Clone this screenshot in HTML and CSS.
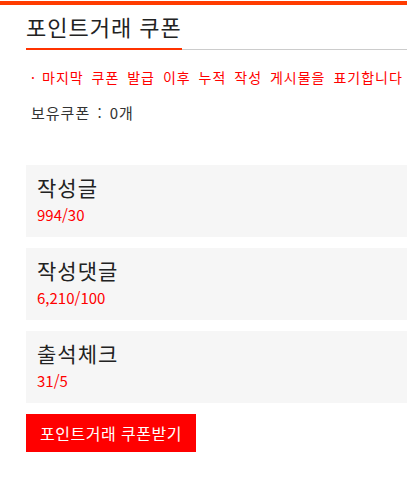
FILE: index.html
```html
<!DOCTYPE html>
<html lang="ko">
<head>
  <meta charset="UTF-8">
  <title>포인트거래 쿠폰</title>
  <meta name="viewport" content="width=device-width, initial-scale=1.0">
  <link rel="stylesheet" href="styles.css">
</head>
<body>
  <div class="top-bar"></div>

  <div class="coupon-wrap">
    <!-- page title with the red underline -->
    <div class="coupon-head">
      <h2>포인트거래 쿠폰</h2>
    </div>

    <p class="notice"><span class="dot">·</span>마지막 쿠폰 발급 이후 누적 작성 게시물을 표기합니다</p>
    <p class="owned">보유쿠폰 : 0개</p>

    <div class="stat-box">
      <div class="stat-title">작성글</div>
      <div class="stat-value">994/30</div>
    </div>
    <div class="stat-box">
      <div class="stat-title">작성댓글</div>
      <div class="stat-value">6,210/100</div>
    </div>
    <div class="stat-box">
      <div class="stat-title">출석체크</div>
      <div class="stat-value">31/5</div>
    </div>

    <button class="coupon-btn">포인트거래 쿠폰받기</button>
  </div>
</body>
</html>
```

FILE: styles.css
```css
* {
  box-sizing: border-box;
}

html, body {
  margin: 0;
  padding: 0;
  overflow: hidden;
}

body {
  padding-top: 1px;
  background: #fff;
  color: #222;
  font-family: "Noto Sans CJK KR", "Noto Sans", sans-serif;
}

.top-bar {
  height: 4px;
  background: #ff3c00;
}

.coupon-wrap {
  padding-left: 26px;
}

.coupon-head {
  display: flex;
  margin-top: 6px;
  border-bottom: 1px solid #cccccc;
}

.coupon-head h2 {
  margin: 0 0 -1px 0;
  padding-bottom: 7px;
  font-size: 22px;
  font-weight: normal;
  line-height: 30px;
  letter-spacing: 1px;
  color: #222;
  border-bottom: 2px solid #ff3300;
}

.notice {
  margin: 17px 0 0 0;
  padding-left: 5px;
  font-size: 14px;
  line-height: 20px;
  color: #ff0000;
  white-space: nowrap;
  letter-spacing: 1px;
  word-spacing: 3px;
}

.notice .dot {
  display: inline-block;
  width: 11px;
  word-spacing: 0;
}

.owned {
  margin: 16px 0 0 0;
  padding-left: 5px;
  font-size: 15px;
  line-height: 20px;
  color: #333;
  letter-spacing: 1px;
  word-spacing: 2px;
}

.stat-box {
  margin-top: 11px;
  padding: 10px 11px 12px;
  background: #f6f6f6;
}

.owned + .stat-box {
  margin-top: 42px;
}

.stat-title {
  font-size: 21px;
  line-height: 24px;
  letter-spacing: 1px;
  color: #222;
}

.stat-value {
  margin-top: 6px;
  font-size: 15px;
  line-height: 20px;
  color: #ff0000;
}

.coupon-btn {
  display: block;
  margin-top: 11px;
  width: 170px;
  height: 38px;
  padding: 0;
  border: none;
  background: #ff0000;
  color: #fff;
  font-family: inherit;
  font-size: 16px;
  letter-spacing: 0.5px;
  cursor: pointer;
}
```
